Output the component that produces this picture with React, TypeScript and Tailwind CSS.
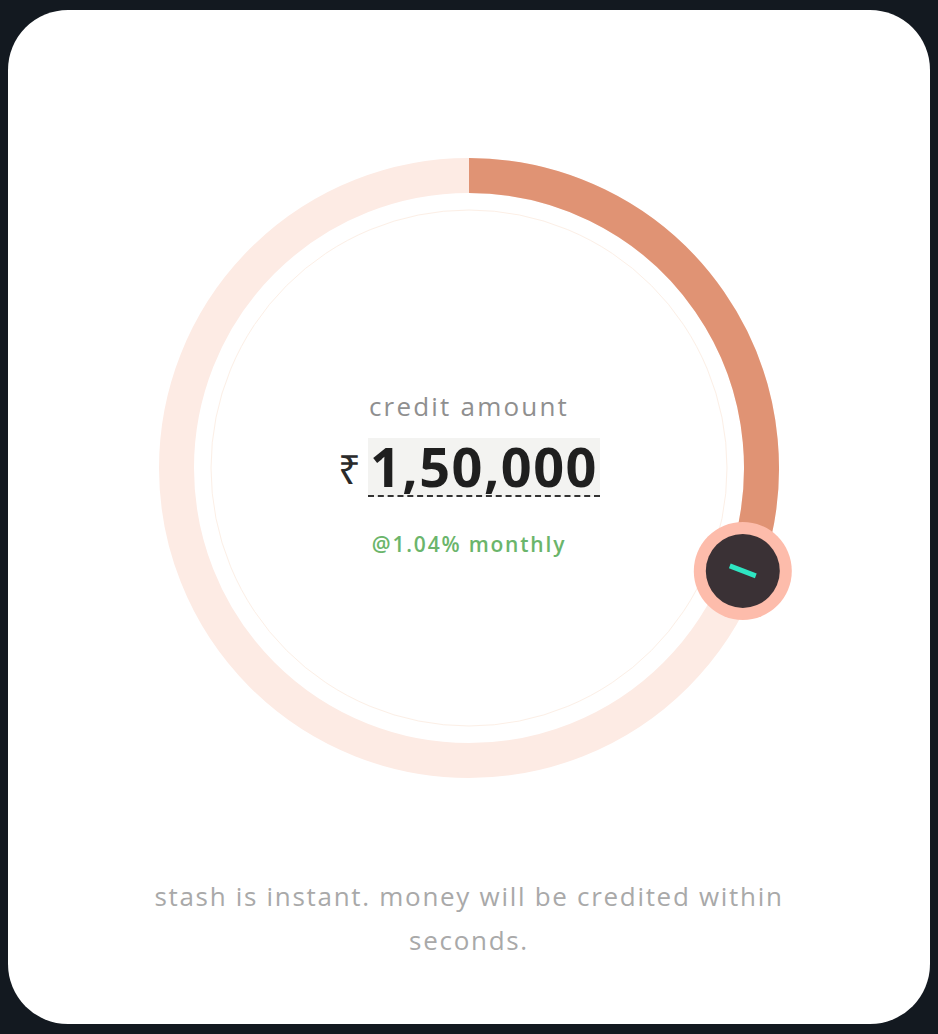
import { useState } from 'react';

const CX = 330;
const CY = 330;
const R = 292.5;

// point on the ring, angle measured clockwise from 12 o'clock
function polar(deg: number) {
  const a = (deg * Math.PI) / 180;
  return { x: CX + R * Math.sin(a), y: CY - R * Math.cos(a) };
}

function Dial({ angle }: { angle: number }) {
  const end = polar(angle);
  const large = angle > 180 ? 1 : 0;

  return (
    <svg width="660" height="660" viewBox="0 0 660 660" className="block">
      {/* Track */}
      <circle cx={CX} cy={CY} r={R} fill="none" stroke="#fdebe4" strokeWidth={35} />
      {/* Thin inner guide */}
      <circle cx={CX} cy={CY} r={258} fill="none" stroke="#fcefe6" strokeWidth={1} />
      {/* Progress */}
      <path
        d={`M ${CX} ${CY - R} A ${R} ${R} 0 ${large} 1 ${end.x} ${end.y}`}
        fill="none"
        stroke="#e09374"
        strokeWidth={35}
      />
      {/* Knob */}
      <g transform={`translate(${end.x} ${end.y})`}>
        <circle r={49} fill="#fdbcab" />
        <circle r={37} fill="#3a3135" />
        <line x1={-13} y1={-5} x2={13} y2={5} stroke="#2ee6c2" strokeWidth={5} />
      </g>
    </svg>
  );
}

export default function App() {
  const [amount] = useState('1,50,000');

  return (
    <div className="min-h-screen bg-[#131920] px-2 py-[10px]">
      <div
        className="h-[1014px] rounded-[60px] bg-white flex flex-col items-center pt-[128px]"
        style={{ fontFamily: '"Open Sans", "Noto Sans", sans-serif' }}
      >
        <div className="relative">
          <Dial angle={110.6} />

          {/* Centre readout */}
          <div className="absolute inset-0 flex flex-col items-center justify-center pt-[12px]">
            <p className="text-[26px] leading-[26px] tracking-[2.2px] text-[#8f8f8f] font-medium">
              credit amount
            </p>
            <div className="flex items-center mt-[19px]">
              <span className="text-[40px] leading-none text-[#2a2a2a] mr-[7px] mt-[2px]">₹</span>
              <span className="bg-[#f3f3f1] border-b-2 border-dashed border-[#333] px-[2px] text-[54px] leading-[57px] tracking-[1.5px] font-bold text-[#1f1f1f]">
                {amount}
              </span>
            </div>
            <p className="mt-[36px] text-[21px] leading-[22px] font-semibold tracking-[1.8px] text-[#6bb56b]">
              @1.04% monthly
            </p>
          </div>
        </div>

        <p className="mt-[76px] max-w-[690px] text-center text-[26px] leading-[44px] tracking-[1.7px] text-[#a9a9a9]">
          stash is instant. money will be credited within seconds.
        </p>
      </div>
    </div>
  );
}
